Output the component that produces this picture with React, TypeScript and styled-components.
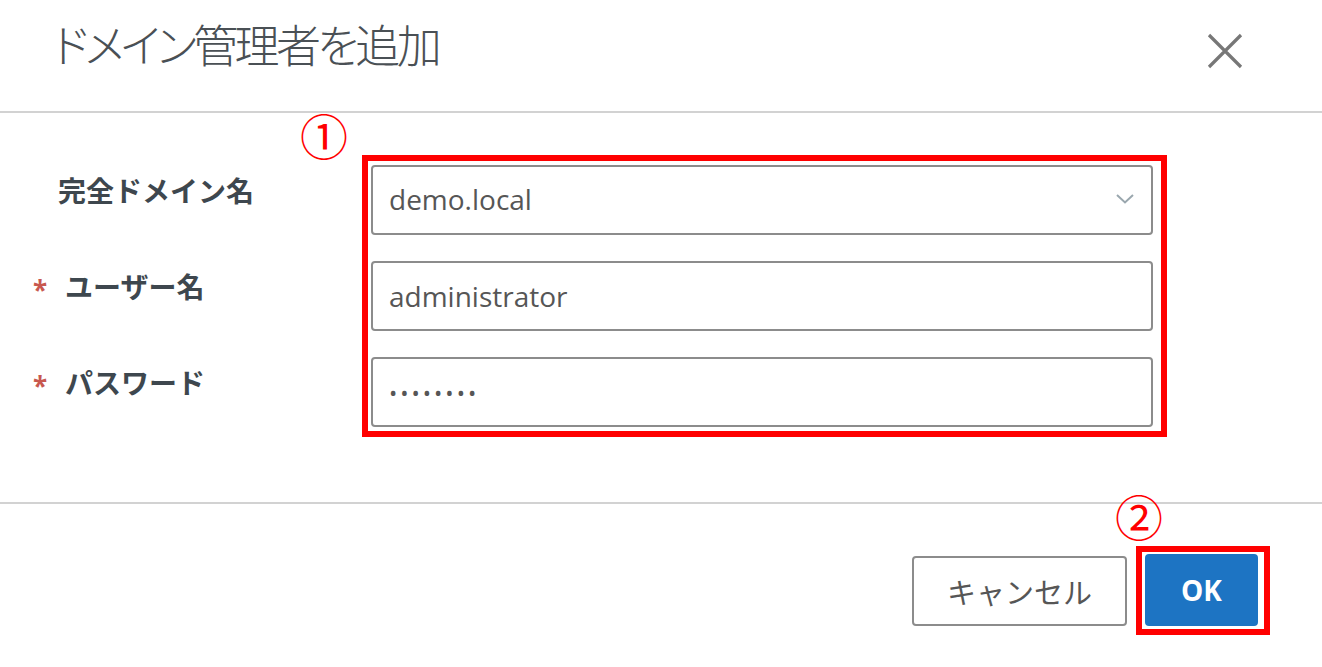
import styled, { createGlobalStyle } from 'styled-components';

const GlobalStyle = createGlobalStyle`
  html, body {
    margin: 0;
    padding: 0;
    background: #fff;
  }
  body {
    font-family: 'Open Sans', 'Noto Sans CJK JP', sans-serif;
    color: #4d5358;
  }
`;

type Field = {
  label: string;
  required: boolean;
  kind: 'select' | 'text' | 'password';
  value: string;
};

const fields: Field[] = [
  { label: '完全ドメイン名', required: false, kind: 'select', value: 'demo.local' },
  { label: 'ユーザー名', required: true, kind: 'text', value: 'administrator' },
  { label: 'パスワード', required: true, kind: 'password', value: 'password' },
];

const App = () => {
  return (
    <>
      <GlobalStyle />
      <Dialog>
        {/* ヘッダー */}
        <Header>
          <Title>ドメイン管理者を追加</Title>
          <CloseButton aria-label="閉じる">
            <svg width="36" height="36" viewBox="0 0 36 36">
              <path d="M2 2 L34 34 M34 2 L2 34" stroke="#777" strokeWidth="3.2" fill="none" />
            </svg>
          </CloseButton>
        </Header>

        {/* フォーム */}
        <Body>
          <LabelColumn>
            {fields.map((f) => (
              <LabelRow key={f.label} $required={f.required}>
                {f.required && <Star>*</Star>}
                {f.label}
              </LabelRow>
            ))}
          </LabelColumn>
          <Highlight>
            <Badge $left={-68} $top={-51}>①</Badge>
            {fields.map((f) =>
              f.kind === 'select' ? (
                <SelectBox key={f.label}>
                  <span>{f.value}</span>
                  <svg width="18" height="10" viewBox="0 0 18 10">
                    <polyline points="1,1 9,8.5 17,1" stroke="#9aa7ae" strokeWidth="2" fill="none" />
                  </svg>
                </SelectBox>
              ) : (
                <TextInput
                  key={f.label}
                  type={f.kind}
                  defaultValue={f.value}
                  readOnly
                  $password={f.kind === 'password'}
                />
              )
            )}
          </Highlight>
        </Body>

        {/* フッター */}
        <Footer>
          <CancelButton>キャンセル</CancelButton>
          <OkFrame>
            <Badge $left={-27} $top={-61}>②</Badge>
            <OkButton>OK</OkButton>
          </OkFrame>
        </Footer>
      </Dialog>
    </>
  );
};

export default App;

const Dialog = styled.div`
  width: 1322px;
  height: 667px;
  background: #fff;
  overflow: hidden;
`;

const Header = styled.header`
  display: flex;
  justify-content: space-between;
  align-items: flex-start;
  height: 111px;
  padding: 0 79px 0 53px;
  border-bottom: 2px solid #d2d2d2;
  box-sizing: content-box;
`;

const Title = styled.h1`
  margin: 21px 0 0;
  font-family: 'Noto Sans CJK JP', sans-serif;
  font-size: 45px;
  font-weight: 300;
  line-height: 1;
  letter-spacing: -3.6px;
  color: #4a5055;
  font-feature-settings: 'palt';
`;

const CloseButton = styled.button`
  margin-top: 33px;
  padding: 0;
  border: none;
  background: none;
  width: 36px;
  height: 36px;
  cursor: pointer;
  display: flex;
`;

const Body = styled.div`
  display: flex;
  margin: 42px 0 65px;
`;

const LabelColumn = styled.div`
  width: 362px;
  display: flex;
  flex-direction: column;
  gap: 26px;
  padding-top: 10px;
`;

const LabelRow = styled.div<{ $required: boolean }>`
  height: 70px;
  box-sizing: border-box;
  display: flex;
  align-items: center;
  padding-bottom: 20px;
  padding-left: ${(p) => (p.$required ? '33px' : '58px')};
  font-family: 'Noto Sans CJK JP', sans-serif;
  font-size: 28px;
  font-weight: 700;
  color: #3e474e;
`;

const Star = styled.span`
  width: 32px;
  font-family: 'Open Sans', sans-serif;
  font-size: 26px;
  font-weight: 700;
  color: #c8584f;
  line-height: 1;
  padding-top: 8px;
`;

const Highlight = styled.div`
  position: relative;
  width: 805px;
  box-sizing: border-box;
  border: 6px solid #ff0000;
  padding: 4px 8px 4px 3px;
  display: flex;
  flex-direction: column;
  gap: 26px;
`;

const Badge = styled.span<{ $left: number; $top: number }>`
  position: absolute;
  left: ${(p) => p.$left}px;
  top: ${(p) => p.$top}px;
  font-family: 'Noto Sans CJK JP', sans-serif;
  font-size: 48px;
  line-height: 1;
  color: #ff0000;
`;

const fieldBox = `
  height: 70px;
  box-sizing: border-box;
  border: 2px solid #8c8c8c;
  border-radius: 4px;
  background: #fff;
  padding: 0 16px;
  font-family: 'Open Sans', sans-serif;
  font-size: 28px;
  color: #565656;
`;

const SelectBox = styled.div`
  ${fieldBox}
  display: flex;
  align-items: center;
  justify-content: space-between;
  padding-right: 17px;
  padding-bottom: 2px;
`;

const TextInput = styled.input<{ $password: boolean }>`
  ${fieldBox}
  width: 100%;
  outline: none;
  letter-spacing: ${(p) => (p.$password ? '3px' : '0')};
  font-size: ${(p) => (p.$password ? '22px' : '28px')};
`;

const Footer = styled.footer`
  border-top: 2px solid #d2d2d2;
  display: flex;
  justify-content: flex-end;
  align-items: center;
  gap: 9px;
  padding: 42px 52px 0 0;
`;

const CancelButton = styled.button`
  width: 215px;
  height: 70px;
  border: 2px solid #8c8c8c;
  border-radius: 4px;
  background: #fff;
  font-family: 'Noto Sans CJK JP', sans-serif;
  font-size: 29px;
  font-weight: 400;
  color: #565656;
  cursor: pointer;
`;

const OkFrame = styled.div`
  position: relative;
  border: 6px solid #ff0000;
  padding: 2px 6px 3px 3px;
  display: flex;
`;

const OkButton = styled.button`
  width: 113px;
  height: 72px;
  border: none;
  border-radius: 4px;
  background: #1d74c3;
  font-family: 'Open Sans', sans-serif;
  font-size: 28px;
  font-weight: 700;
  color: #fff;
  cursor: pointer;
`;
